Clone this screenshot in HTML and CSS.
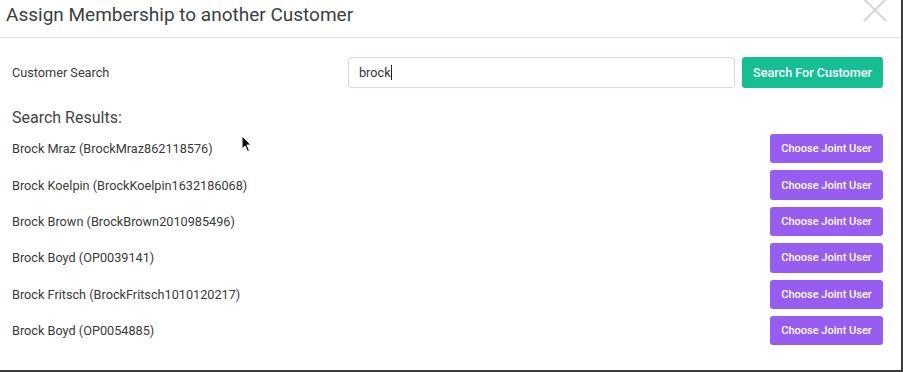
FILE: index.html
```html
<!DOCTYPE html>
<html lang="en">

<head>
    <meta charset="UTF-8">
    <title>Assign Membership</title>
    <link rel="stylesheet" href="styles.css">
</head>

<body>

    <div class="modal">
        <!-- Header with title and close icon -->
        <div class="modal-header">
            <h2 class="modal-title">Assign Membership to another Customer</h2>
            <button class="close-btn" aria-label="Close">
                <svg width="26" height="26" viewBox="0 0 26 26">
                    <path d="M2 2 L24 24 M24 2 L2 24" stroke="#d6d6d6" stroke-width="2" fill="none" />
                </svg>
            </button>
        </div>

        <div class="modal-body">
            <!-- Search form -->
            <form class="search-row">
                <label class="search-label" for="customerSearch">Customer Search</label>
                <div class="search-input">brock<span class="caret"></span></div>
                <button type="button" class="btn btn-green">Search For Customer</button>
            </form>

            <h3 class="results-title">Search Results:</h3>

            <div class="results">
                <div class="result-row">
                    <span>Brock Mraz (BrockMraz862118576)</span>
                    <button class="btn btn-purple">Choose Joint User</button>
                </div>
                <div class="result-row">
                    <span>Brock Koelpin (BrockKoelpin1632186068)</span>
                    <button class="btn btn-purple">Choose Joint User</button>
                </div>
                <div class="result-row">
                    <span>Brock Brown (BrockBrown2010985496)</span>
                    <button class="btn btn-purple">Choose Joint User</button>
                </div>
                <div class="result-row">
                    <span>Brock Boyd (OP0039141)</span>
                    <button class="btn btn-purple">Choose Joint User</button>
                </div>
                <div class="result-row">
                    <span>Brock Fritsch (BrockFritsch1010120217)</span>
                    <button class="btn btn-purple">Choose Joint User</button>
                </div>
                <div class="result-row">
                    <span>Brock Boyd (OP0054885)</span>
                    <button class="btn btn-purple">Choose Joint User</button>
                </div>
            </div>
        </div>

        <!-- Mouse pointer captured in the screenshot -->
        <svg class="cursor" width="12" height="18" viewBox="0 0 12 18">
            <path d="M1 1 L1 14 L4 11 L6.5 16.5 L8.5 15.5 L6 10 L10 10 Z" fill="#111" stroke="#fff" stroke-width="1" />
        </svg>
    </div>

</body>

</html>
```

FILE: styles.css
```css
/* Page behind the dialog */
body {
    margin: 0;
    background: #3c3c3c;
    font-family: 'Roboto', 'Liberation Sans', sans-serif;
    color: #3a3a3a;
}

.modal {
    position: relative;
    width: 901px;
    height: 370px;
    background: #fff;
    overflow: hidden;
}

/* Header */
.modal-header {
    display: flex;
    justify-content: space-between;
    align-items: flex-start;
    height: 38px;
    border-bottom: 1px solid #dde1e6;
    box-sizing: border-box;
}

.modal-title {
    margin: 0;
    padding: 3px 0 0 6px;
    font-size: 19px;
    font-weight: 400;
    line-height: 24px;
    color: #3a3f44;
}

.close-btn {
    background: none;
    border: none;
    padding: 0;
    margin: -3px 13px 0 0;
    cursor: pointer;
}

/* Body */
.modal-body {
    padding: 19px 18px 0 12px;
}

.search-row {
    display: flex;
    align-items: center;
    height: 31px;
    margin: 0;
}

.search-label {
    width: 336px;
    font-size: 12.7px;
}

.search-input {
    display: flex;
    align-items: center;
    width: 387px;
    height: 31px;
    box-sizing: border-box;
    padding: 0 10px;
    border: 1px solid #d6d9ee;
    border-radius: 3px;
    font-size: 12.7px;
    color: #333;
}

.caret {
    display: inline-block;
    width: 1px;
    height: 15px;
    background: #222;
}

.btn {
    border: none;
    border-radius: 3px;
    color: #fff;
    font-family: inherit;
    font-weight: 500;
    cursor: pointer;
}

.btn-green {
    margin-left: 7px;
    width: 141px;
    height: 31px;
    background: #16bf93;
    font-size: 12.6px;
}

.results-title {
    margin: 19px 0 0;
    font-size: 16px;
    font-weight: 400;
    line-height: 22px;
    color: #444;
}

.results {
    margin-top: 5px;
}

.result-row {
    display: flex;
    justify-content: space-between;
    align-items: center;
    height: 29.4px;
    margin-bottom: 7px;
    font-size: 12.7px;
}

.btn-purple {
    width: 113px;
    height: 29.4px;
    background: #965df0;
    font-size: 11px;
}

.cursor {
    position: absolute;
    left: 241px;
    top: 135px;
}
```
